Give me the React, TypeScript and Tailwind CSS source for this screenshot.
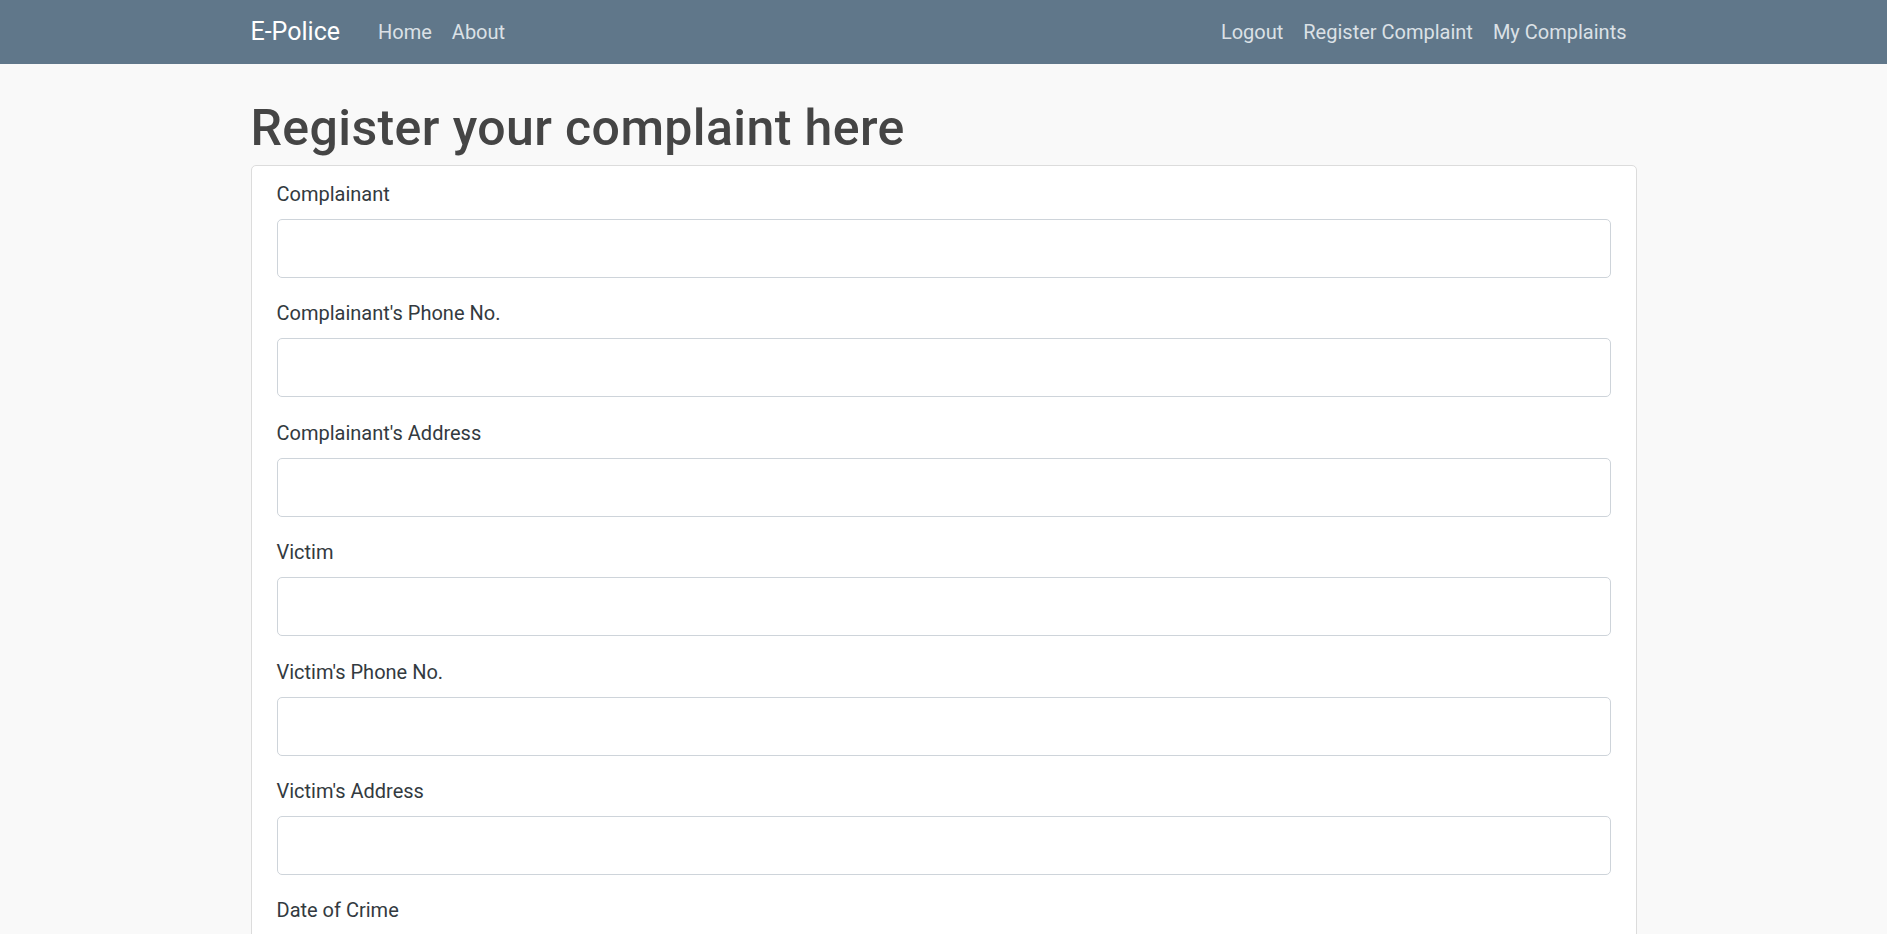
import React from "react";

const fields = [
  "Complainant",
  "Complainant's Phone No.",
  "Complainant's Address",
  "Victim",
  "Victim's Phone No.",
  "Victim's Address",
  "Date of Crime",
];

function NavLink({ children }: { children: React.ReactNode }) {
  return (
    <a href="#" className="px-[10px] text-[20px] leading-[30px] text-[#dbe1e6] hover:text-white">
      {children}
    </a>
  );
}

export default function App() {
  return (
    <div className="min-h-screen bg-[#f9f9f9] font-['Roboto',sans-serif]">
      {/* Top navbar */}
      <nav className="h-[64px] bg-[#60778a]">
        <div className="mx-auto flex h-full w-[1386px] items-center">
          <a href="#" className="mr-[28px] text-[25px] leading-[36px] text-white">
            E-Police
          </a>
          <div className="flex">
            <NavLink>Home</NavLink>
            <NavLink>About</NavLink>
          </div>
          <div className="ml-auto flex">
            <NavLink>Logout</NavLink>
            <NavLink>Register Complaint</NavLink>
            <NavLink>My Complaints</NavLink>
          </div>
        </div>
      </nav>

      <main className="mx-auto w-[1386px] pt-[34px]">
        <h1 className="mb-[7px] text-[50px] leading-[60px] font-medium tracking-[0.4px] text-[#454545]">
          Register your complaint here
        </h1>
        <div className="rounded-[5px] border border-[#dcdcdc] bg-white px-[25px] pt-[13px] pb-[5px]">
          <form>
            {fields.map((f) => (
              <div key={f} className="mb-[20.4px]">
                <label className="mb-[10px] block text-[20px] leading-[30px] text-[#333a40]">{f}</label>
                <input
                  type="text"
                  className="block h-[59px] w-full rounded-[5px] border border-[#ced4da] bg-white px-[15px] text-[20px] text-[#495057] outline-none"
                />
              </div>
            ))}
          </form>
        </div>
      </main>
    </div>
  );
}
